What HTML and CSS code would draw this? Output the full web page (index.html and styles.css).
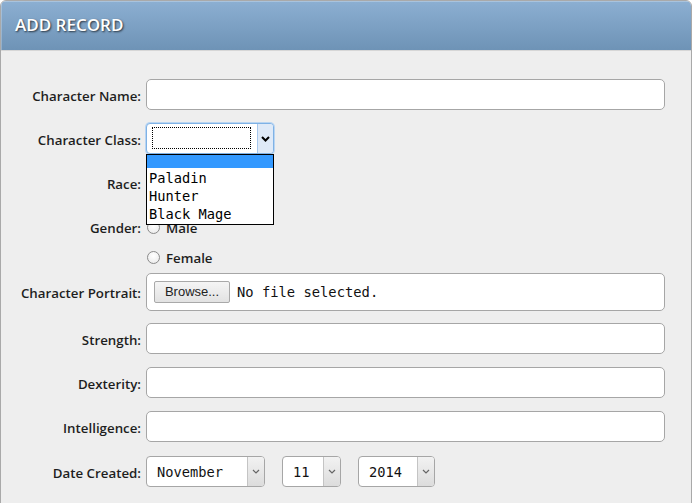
FILE: index.html
```html
<!DOCTYPE html>
<html>
<head>
<meta charset="utf-8">
<link rel="stylesheet" href="styles.css">
</head>
<body>
<div class="panel">
  <div class="panel-header">ADD RECORD</div>
  <form class="panel-body">
    <div class="row">
      <label class="label">Character Name:</label>
      <div class="text-input"></div>
    </div>
    <div class="row">
      <label class="label">Character Class:</label>
      <div class="select-wrap">
        <div class="select select-focus select-class">
          <div class="select-value"><span class="focus-ring"></span></div>
          <div class="select-arrow arrow-focus">
            <svg width="9" height="6" viewBox="0 0 9 6"><path d="M1 1 L4.5 4.5 L8 1" fill="none" stroke="#000" stroke-width="2"/></svg>
          </div>
        </div>
        <ul class="dropdown">
          <li class="opt opt-blank"></li>
          <li class="opt">Paladin</li>
          <li class="opt">Hunter</li>
          <li class="opt">Black Mage</li>
        </ul>
      </div>
    </div>
    <div class="row">
      <label class="label">Race:</label>
      <div class="select select-class">
        <div class="select-value"></div>
        <div class="select-arrow"></div>
      </div>
    </div>
    <div class="row row-top">
      <label class="label label-top">Gender:</label>
      <div class="radios">
        <div class="radio-item"><span class="radio"></span><span class="radio-text">Male</span></div>
        <div class="radio-item"><span class="radio"></span><span class="radio-text">Female</span></div>
      </div>
    </div>
    <div class="row row-file">
      <label class="label">Character Portrait:</label>
      <div class="file-input">
        <span class="browse">Browse...</span>
        <span class="file-text">No file selected.</span>
      </div>
    </div>
    <div class="row">
      <label class="label">Strength:</label>
      <div class="text-input"></div>
    </div>
    <div class="row">
      <label class="label">Dexterity:</label>
      <div class="text-input"></div>
    </div>
    <div class="row row-last-input">
      <label class="label">Intelligence:</label>
      <div class="text-input"></div>
    </div>
    <div class="row row-date">
      <label class="label">Date Created:</label>
      <div class="date-group">
        <div class="select select-month">
          <div class="select-value">November</div>
          <div class="select-arrow arrow-gray">
            <svg width="8" height="5" viewBox="0 0 8 5"><path d="M1 1 L4 4 L7 1" fill="none" stroke="#666" stroke-width="1.2"/></svg>
          </div>
        </div>
        <div class="select select-day">
          <div class="select-value">11</div>
          <div class="select-arrow arrow-gray">
            <svg width="8" height="5" viewBox="0 0 8 5"><path d="M1 1 L4 4 L7 1" fill="none" stroke="#666" stroke-width="1.2"/></svg>
          </div>
        </div>
        <div class="select select-year">
          <div class="select-value">2014</div>
          <div class="select-arrow arrow-gray">
            <svg width="8" height="5" viewBox="0 0 8 5"><path d="M1 1 L4 4 L7 1" fill="none" stroke="#666" stroke-width="1.2"/></svg>
          </div>
        </div>
      </div>
    </div>
  </form>
</div>
</body>
</html>
```
FILE: styles.css
```css
* { box-sizing: border-box; }
html, body { margin: 0; padding: 0; background: #ffffff; }
body { width: 693px; height: 503px; overflow: hidden; }

.panel {
  width: 692px;
  height: 520px;
  border: 1px solid #a9a9a9;
  border-radius: 6px 6px 0 0;
  background: #eeeeee;
  overflow: hidden;
}

.panel-header {
  height: 50px;
  border-bottom: 1px solid #d6d6d6;
  background: linear-gradient(#8cafd2, #6e93b6);
  color: #ffffff;
  font-family: "Open Sans", sans-serif;
  font-weight: 600;
  font-size: 17px;
  line-height: 48px;
  padding-left: 14px;
  text-shadow: 1px 1px 2px rgba(0,0,0,0.7);
  box-shadow: inset 1px 1px 0 rgba(255,255,255,0.25);
}

.panel-body {
  padding-top: 28px;
  margin: 0;
}

.row {
  display: flex;
  align-items: center;
  margin-bottom: 13px;
}
.row-top { align-items: flex-start; margin-bottom: 6px; }
.row-file { margin-bottom: 12px; }
.row-last-input { margin-bottom: 14px; }

.label {
  width: 140px;
  flex: none;
  margin-right: 5px;
  padding-top: 2px;
  text-align: right;
  font-family: "Open Sans", sans-serif;
  font-weight: 600;
  font-size: 13.3px;
  color: #1e1e1e;
}
.label-top { padding-top: 7px; line-height: 20px; }

.text-input {
  width: 519px;
  height: 31px;
  background: #ffffff;
  border: 1px solid #a6a6a6;
  border-radius: 5px;
}

.select-wrap { position: relative; }

.select {
  display: flex;
  height: 31px;
  background: #ffffff;
  border: 1px solid #a6a6a6;
  border-radius: 4px;
  overflow: hidden;
}
.select-class { width: 128px; }
.select-focus { border-color: #7fb2e5; box-shadow: 0 0 0 1px #b9d5f2; }

.select-value {
  flex: 1;
  display: flex;
  align-items: center;
  padding-left: 10px;
  font-family: "DejaVu Sans Mono", monospace;
  font-size: 13.7px;
  color: #111;
}
.select-class .select-value { padding: 3px 5px 4px 5px; }
.focus-ring {
  display: block;
  width: 99px;
  height: 22px;
  border: 1px dotted #000;
}

.select-arrow {
  width: 17px;
  flex: none;
  display: flex;
  align-items: center;
  justify-content: center;
  border-left: 1px solid #c4c4c4;
  background: linear-gradient(#f2f2f2, #dcdcdc);
}
.arrow-focus {
  width: 16px;
  border-left: 1px solid #a8c8ec;
  background: #dfeaf8;
}

.dropdown {
  position: absolute;
  left: 0;
  top: 31px;
  width: 128px;
  margin: 0;
  padding: 0 0 1px 0;
  list-style: none;
  background: #ffffff;
  border: 1px solid #000;
  z-index: 5;
}
.opt {
  height: 18px;
  line-height: 18px;
  padding-left: 2px;
  font-family: "DejaVu Sans Mono", monospace;
  font-size: 13.7px;
  color: #000;
}
.opt-blank { height: 13px; margin-bottom: 1px; background: #3399ff; }

.radios { display: flex; flex-direction: column; gap: 10px; padding-top: 6px; }
.radio-item { display: flex; align-items: center; height: 20px; }
.radio {
  width: 13px;
  height: 13px;
  border-radius: 50%;
  border: 1px solid #8a8a8a;
  background: radial-gradient(circle at 50% 35%, #ffffff, #e8e8e8);
  margin-left: 1px;
  margin-right: 6px;
}
.radio-text {
  padding-top: 2px;
  font-family: "Open Sans", sans-serif;
  font-weight: 600;
  font-size: 13.3px;
  color: #1e1e1e;
}

.file-input {
  width: 519px;
  height: 38px;
  display: flex;
  align-items: center;
  padding-left: 7px;
  background: #ffffff;
  border: 1px solid #a6a6a6;
  border-radius: 5px;
}
.browse {
  width: 76px;
  height: 22px;
  line-height: 20px;
  text-align: center;
  border: 1px solid #a9a9a9;
  border-radius: 2px;
  background: linear-gradient(#f5f5f5, #e2e2e2);
  font-family: "Liberation Sans", sans-serif;
  font-size: 13px;
  color: #222;
}
.file-text {
  margin-left: 7px;
  font-family: "DejaVu Sans Mono", monospace;
  font-size: 13.8px;
  color: #111;
}

.date-group { display: flex; gap: 17px; }
.select-month { width: 119px; }
.select-day { width: 59px; }
.select-year { width: 77px; }
```
